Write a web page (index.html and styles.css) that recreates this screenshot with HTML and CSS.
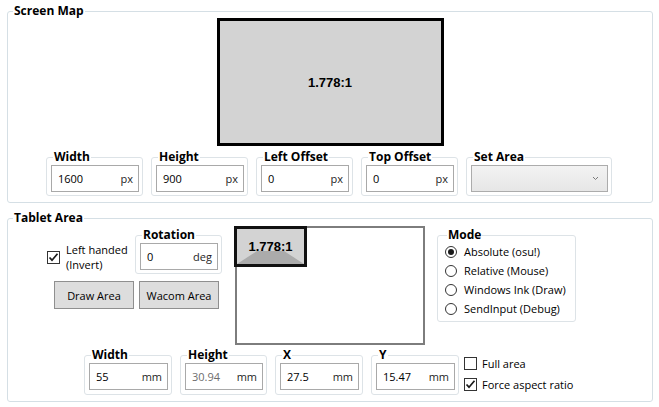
FILE: index.html
```html
<!DOCTYPE html>
<html>
<head>
<meta charset="utf-8">
<link rel="stylesheet" href="styles.css">
</head>
<body>
<div class="app">
  <fieldset class="group screen-map">
    <legend class="title">Screen Map</legend>
    <div class="screen-box"><span class="ratio">1.778:1</span></div>
    <div class="field-row screen-fields">
      <fieldset class="sub w97">
        <legend class="sub-title">Width</legend>
        <div class="input"><span class="val">1600</span><span class="unit">px</span></div>
      </fieldset>
      <fieldset class="sub w97">
        <legend class="sub-title">Height</legend>
        <div class="input"><span class="val">900</span><span class="unit">px</span></div>
      </fieldset>
      <fieldset class="sub w97">
        <legend class="sub-title">Left Offset</legend>
        <div class="input"><span class="val">0</span><span class="unit">px</span></div>
      </fieldset>
      <fieldset class="sub w97">
        <legend class="sub-title">Top Offset</legend>
        <div class="input"><span class="val">0</span><span class="unit">px</span></div>
      </fieldset>
      <fieldset class="sub w146">
        <legend class="sub-title">Set Area</legend>
        <div class="combo"><svg class="chev" width="7" height="5" viewBox="0 0 7 5"><path d="M1 1 L3.5 3.5 L6 1" fill="none" stroke="#7a7a7a" stroke-width="1"/></svg></div>
      </fieldset>
    </div>
  </fieldset>

  <fieldset class="group tablet-area">
    <legend class="title">Tablet Area</legend>
    <div class="tablet-top">
      <div class="left-block">
        <div class="left-row">
          <label class="check-label handed">
            <span class="checkbox checked"><svg width="11" height="11" viewBox="0 0 11 11"><path d="M1.5 5.5 L4 8.2 L9.5 1.8" fill="none" stroke="#1a1a1a" stroke-width="1.7"/></svg></span>
            <span class="check-text">Left handed<br>(Invert)</span>
          </label>
          <fieldset class="sub rotation">
            <legend class="sub-title">Rotation</legend>
            <div class="input"><span class="val">0</span><span class="unit">deg</span></div>
          </fieldset>
        </div>
        <div class="buttons">
          <button class="btn">Draw Area</button>
          <button class="btn">Wacom Area</button>
        </div>
      </div>
      <div class="tablet-box">
        <div class="area-rect">
          <svg class="area-shape" width="67" height="35" viewBox="0 0 67 35"><polygon points="0,35 20,22 47,22 67,35" fill="#ababab"/></svg>
          <span class="ratio small">1.778:1</span>
        </div>
      </div>
      <fieldset class="sub mode">
        <legend class="sub-title">Mode</legend>
        <div class="radio-row"><span class="radio on"></span><span>Absolute (osu!)</span></div>
        <div class="radio-row"><span class="radio"></span><span>Relative (Mouse)</span></div>
        <div class="radio-row"><span class="radio"></span><span>Windows Ink (Draw)</span></div>
        <div class="radio-row"><span class="radio"></span><span>SendInput (Debug)</span></div>
      </fieldset>
    </div>
    <div class="field-row tablet-fields">
      <fieldset class="sub w88">
        <legend class="sub-title">Width</legend>
        <div class="input"><span class="val">55</span><span class="unit">mm</span></div>
      </fieldset>
      <fieldset class="sub w87">
        <legend class="sub-title">Height</legend>
        <div class="input"><span class="val disabled">30.94</span><span class="unit">mm</span></div>
      </fieldset>
      <fieldset class="sub w88">
        <legend class="sub-title">X</legend>
        <div class="input"><span class="val">27.5</span><span class="unit">mm</span></div>
      </fieldset>
      <fieldset class="sub w88">
        <legend class="sub-title">Y</legend>
        <div class="input"><span class="val">15.47</span><span class="unit">mm</span></div>
      </fieldset>
      <div class="check-col">
        <label class="check-label line">
          <span class="checkbox"></span>
          <span>Full area</span>
        </label>
        <label class="check-label line">
          <span class="checkbox checked"><svg width="11" height="11" viewBox="0 0 11 11"><path d="M1.5 5.5 L4 8.2 L9.5 1.8" fill="none" stroke="#1a1a1a" stroke-width="1.7"/></svg></span>
          <span>Force aspect ratio</span>
        </label>
      </div>
    </div>
  </fieldset>
</div>
</body>
</html>
```

FILE: styles.css
```css
* { box-sizing: border-box; }
html, body { margin: 0; padding: 0; background: #ffffff; }
body {
  font-family: "Open Sans", "Liberation Sans", sans-serif;
  font-size: 11px;
  color: #000;
}
.app { padding: 4px 6px 0 7px; width: 659px; }

fieldset { margin: 0; min-width: 0; }
.group {
  border: 1px solid #d5dfe5;
  border-radius: 3px;
  padding: 0 0 6px 0;
}
.title {
  font-weight: 700;
  font-size: 12px;
  line-height: 14px;
  padding: 0 1px;
  margin-left: 5px;
}
.tablet-area { margin-top: 8px; }

.screen-box {
  width: 227px;
  height: 128px;
  margin: 0 auto;
  border: 3px solid #000;
  background: #d3d3d3;
  display: flex;
  align-items: center;
  justify-content: center;
}
.ratio { font-family: "Liberation Sans", sans-serif; font-weight: 700; font-size: 13px; }

.field-row { display: flex; gap: 8px; }
.screen-fields { margin: 4px 0 0 38px; }

.sub {
  border: 1px solid #dde3e7;
  border-radius: 3px;
  padding: 1px 3px 3px 4px;
}
.sub-title {
  font-weight: 700;
  font-size: 12px;
  line-height: 14px;
  padding: 0 1px;
  margin-left: 2px;
}
.w97 { width: 97px; }
.w146 { width: 146px; }
.w88 { width: 88px; }
.w87 { width: 87px; }

.input {
  height: 27px;
  border: 1px solid #a9a9a9;
  display: flex;
  align-items: center;
  justify-content: space-between;
  padding: 0 5px 0 6px;
  background: #fff;
}
.val { color: #000; }
.val.disabled { color: #6d6d6d; }
.unit { color: #1e1e1e; }

.combo {
  height: 27px;
  border: 1px solid #acacac;
  background: linear-gradient(#f3f3f3, #e6e6e6);
  display: flex;
  align-items: center;
  justify-content: flex-end;
  padding-right: 8px;
}

.tablet-top { display: flex; align-items: flex-start; }
.left-block { width: 175px; margin-left: 39px; }
.left-row { display: flex; align-items: flex-start; justify-content: space-between; margin-top: 3px; }
.rotation { width: 87px; }
.handed { margin-top: 14px; }
.check-label { display: flex; align-items: center; gap: 6px; line-height: 15px; }
.checkbox {
  width: 13px; height: 13px;
  border: 1px solid #333;
  background: #fff;
  display: flex; align-items: center; justify-content: center;
  flex: none;
}
.buttons { display: flex; gap: 5px; margin: 7px 0 0 7px; }
.btn {
  width: 80px; height: 28px;
  border: 1px solid #8f8f8f;
  background: #dddddd;
  font-family: inherit;
  font-size: 11px;
  color: #000;
  padding: 0;
}

.tablet-box {
  position: relative;
  width: 190px;
  height: 119px;
  margin: 1px 0 0 13px;
  border: 2px solid #7d7d7d;
  background: #fff;
}
.area-rect {
  position: absolute;
  left: -3px; top: -2px;
  width: 73px; height: 41px;
  border: 3px solid #111;
  background: #d3d3d3;
  display: flex; align-items: center; justify-content: center;
}
.area-shape { position: absolute; left: 0; bottom: 0; }
.ratio.small { position: relative; margin-top: -1px; }

.mode { width: 139px; margin: 3px 0 0 12px; padding: 0 3px 3px 7px; }
.radio-row { display: flex; align-items: center; gap: 7px; height: 19px; }
.radio {
  width: 12px; height: 12px;
  border: 1px solid #333;
  border-radius: 50%;
  background: #fff;
  display: flex; align-items: center; justify-content: center;
  flex: none;
}
.radio.on::after {
  content: "";
  width: 6px; height: 6px;
  border-radius: 50%;
  background: #1a1a1a;
}

.tablet-fields { margin: 3px 0 0 76px; }
.check-col { margin: 5px 0 0 -3px; display: flex; flex-direction: column; }
.check-label.line { line-height: 21px; height: 21px; gap: 5px; }
```
